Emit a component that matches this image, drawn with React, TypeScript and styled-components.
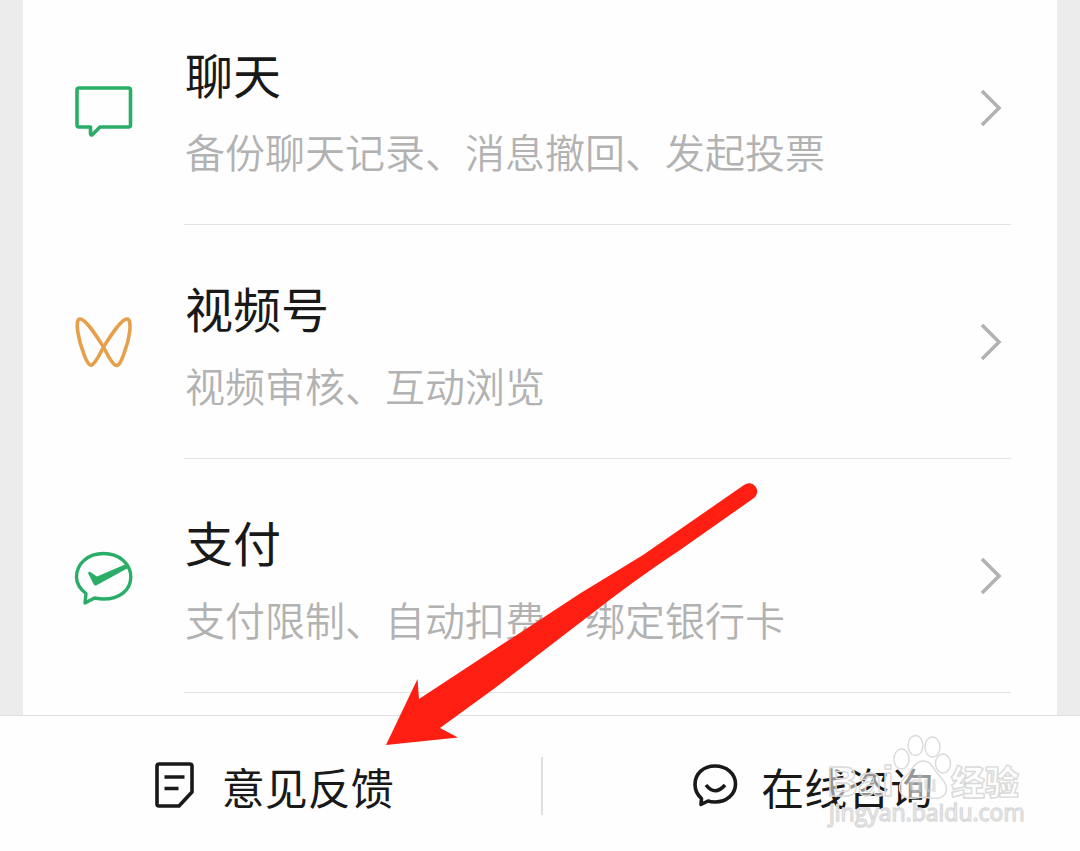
import React from "react";
import styled, { createGlobalStyle } from "styled-components";

const GlobalStyle = createGlobalStyle`
  body {
    margin: 0;
    background: #ececec;
    font-family: "Noto Sans CJK SC", "Noto Sans", sans-serif;
  }
  *, *::before, *::after { box-sizing: border-box; }
`;

const Page = styled.div`
  position: relative;
  display: flex;
  flex-direction: column;
  min-height: 100vh;
  overflow: hidden;
`;

const Panel = styled.main`
  flex: 1;
  margin: 0 23px;
  padding: 0 46px 22px 52px;
  background: #fefefe;
`;

const TopicList = styled.ul`
  list-style: none;
  margin: -9px 0 0;
  padding: 0;
`;

const TopicLink = styled.a`
  display: grid;
  grid-template-columns: 58px 1fr;
  column-gap: 51px;
  align-items: center;
  color: inherit;
  text-decoration: none;
`;

const TopicBody = styled.div`
  display: flex;
  align-items: center;
  justify-content: space-between;
  padding-right: 9px;
  border-bottom: 1px solid #e4e4e4;
`;

const TopicText = styled.div`
  display: flex;
  flex-direction: column;
  gap: 13px;
  padding: 46px 0 44px 1px;
`;

const TopicTitle = styled.h2`
  margin: 0;
  font-size: 48px;
  font-weight: 400;
  line-height: 72px;
  color: #191919;
`;

const TopicSummary = styled.p`
  margin: 0;
  font-size: 40px;
  font-weight: 350;
  line-height: 58px;
  color: #b2b2b2;
`;

const Icon = styled.svg`
  display: block;
  flex: none;
  fill: none;
  overflow: visible;
`;

const Footer = styled.footer`
  display: flex;
  align-items: center;
  padding: 41px 0 36px 3px;
  border-top: 1px solid #dfdfdf;
  background: #fefefe;
`;

const FooterButton = styled.button`
  flex: 1;
  display: flex;
  align-items: center;
  justify-content: center;
  gap: 24px;
  padding: 0 0 0 4px;
  border: 0;
  background: none;
  font: inherit;
  font-size: 43px;
  line-height: 58px;
  color: #191919;
  cursor: pointer;
`;

const FooterDivider = styled.span`
  width: 2px;
  height: 58px;
  background: #e0e0e0;
`;

const Arrow = styled.svg`
  position: absolute;
  left: 386px;
  bottom: 105px;
  pointer-events: none;
`;

const Watermark = styled.svg`
  position: absolute;
  right: 54px;
  bottom: 20px;
  overflow: visible;
  pointer-events: none;
`;

const ChatIcon = () => (
  <Icon width="58" height="58" viewBox="0 0 58 58" stroke="#2aae67" strokeWidth="3.6" strokeLinejoin="round">
    <path d="M4 9H53.500Q55.500 9 55.500 11V46Q55.500 48 53.500 48H25L17.500 55.500Q15.500 57 15.500 54V48H4Q2 48 2 46V11Q2 9 4 9Z" />
  </Icon>
);

const ChannelsIcon = () => (
  <Icon width="58" height="58" viewBox="0 0 58 58" stroke="#e6a04b" strokeWidth="3.600" strokeLinejoin="round">
    <path d="M28.500 34C22 24 11 6 5 6C-1 6 4 29 8.500 40C13 53 16 54 19 50C22 47 25 41 28.500 34C35 24 46 6 52 6C58 6 54 28 49.500 39C45 53 42 55 38 50C35 47 32 41 28.500 34Z" />
  </Icon>
);

const PayIcon = () => (
  <Icon width="58" height="58" viewBox="0 0 58 58">
    <path
      d="M11 46.500C5 42 1.500 36.500 1.500 30C1.500 16.500 13 6.500 28.500 6.500C44 6.500 55.800 16.500 55.800 30C55.800 43.500 44 52 28.500 52C25.500 52 22.500 51.500 19.500 51L10 56Z"
      stroke="#2aae67"
      strokeWidth="3.400"
      strokeLinejoin="round"
    />
    <path d="M13 26Q14 24 16 25.500L22 29.500L50 17.500L54 20.500L22 38Q20 39.500 18.500 37Z" fill="#2aae67" />
  </Icon>
);

const Chevron = () => (
  <Icon width="22" height="38" viewBox="0 0 22 38" stroke="#b2b2b2" strokeWidth="3.600" aria-hidden="true">
    <path d="M2 2L19 19L2 36" />
  </Icon>
);

const NoteIcon = () => (
  <Icon width="44" height="44" viewBox="0 0 44 44" stroke="#191919" strokeWidth="3.600" strokeLinejoin="round">
    <path d="M5 0H36Q38 0 38 2V28L25 42H5Q3 42 3 40V2Q3 0 5 0Z" />
    <path d="M10.500 13H30.500M10.500 24.500H24.500" />
  </Icon>
);

const SmileIcon = () => (
  <Icon width="44" height="44" viewBox="0 0 44 44" stroke="#191919" strokeWidth="3.600" strokeLinejoin="round">
    <path d="M8.500 34.500C4 30.500 2 25.500 2 20.500C2 9.500 10.500 2 22 2C33.500 2 42.500 9.500 42.500 20C42.500 30.500 33.500 38 22 38C19.500 38 17 37.700 15 37L8 40.500Z" />
    <path d="M13 21Q22 32.500 32 21" />
  </Icon>
);

const topics = [
  { title: "聊天", summary: "备份聊天记录、消息撤回、发起投票", icon: <ChatIcon /> },
  { title: "视频号", summary: "视频审核、互动浏览", icon: <ChannelsIcon /> },
  { title: "支付", summary: "支付限制、自动扣费、绑定银行卡", icon: <PayIcon /> },
];

export default function App() {
  return (
    <Page>
      <GlobalStyle />
      <Panel>
        <TopicList>
          {topics.map((topic) => (
            <li key={topic.title}>
              <TopicLink href="#">
                {topic.icon}
                <TopicBody>
                  <TopicText>
                    <TopicTitle>{topic.title}</TopicTitle>
                    <TopicSummary>{topic.summary}</TopicSummary>
                  </TopicText>
                  <Chevron />
                </TopicBody>
              </TopicLink>
            </li>
          ))}
        </TopicList>
      </Panel>
      <Footer>
        <FooterButton type="button">
          <NoteIcon />
          意见反馈
        </FooterButton>
        <FooterDivider />
        <FooterButton type="button">
          <SmileIcon />
          在线咨询
        </FooterButton>
      </Footer>
      <Arrow width="374" height="264" viewBox="0 0 374 264" aria-hidden="true">
        <path
          d="M0 263L31.500 197L33 217L194 111.500Q226 92 257 73L358 3A8 8 0 0 1 368 16L294 68Q250 97 204 133L109 206L54 246L72 255.500Z"
          fill="#ff1f12"
        />
      </Arrow>
      <Watermark width="200" height="98" viewBox="0 0 200 98" aria-hidden="true">
        <g
          fill="#ffffff"
          fillOpacity="0.55"
          stroke="#dadada"
          strokeWidth="1.400"
          strokeLinejoin="round"
          fontFamily='"Liberation Sans", sans-serif'
        >
          <text x="1" y="63" fontSize="43" fontWeight="700">Bai</text>
          <ellipse cx="75.500" cy="26" rx="7.500" ry="10" />
          <ellipse cx="89.500" cy="12.500" rx="7.500" ry="10" />
          <ellipse cx="106.500" cy="14" rx="7.500" ry="10" />
          <ellipse cx="117" cy="30.500" rx="7.500" ry="9.500" />
          <path d="M97 28C90 28 87 35 82 41C76 47 72 51 74 58C77 67 86 66 97 64C107 66 117 67 120 59C122 51 116 46 111 40C106 33 104 28 97 28Z" />
          <text x="83" y="59" fontSize="23" fontWeight="700" fill="#c9c9c9" stroke="none">du</text>
          <text x="125" y="62" fontSize="34" fontWeight="900" fontFamily='"Noto Sans CJK SC", sans-serif'>经验</text>
          <text x="3" y="88" fontSize="23" fontFamily='"Open Sans", sans-serif'>jingyan.baidu.com</text>
        </g>
      </Watermark>
    </Page>
  );
}
